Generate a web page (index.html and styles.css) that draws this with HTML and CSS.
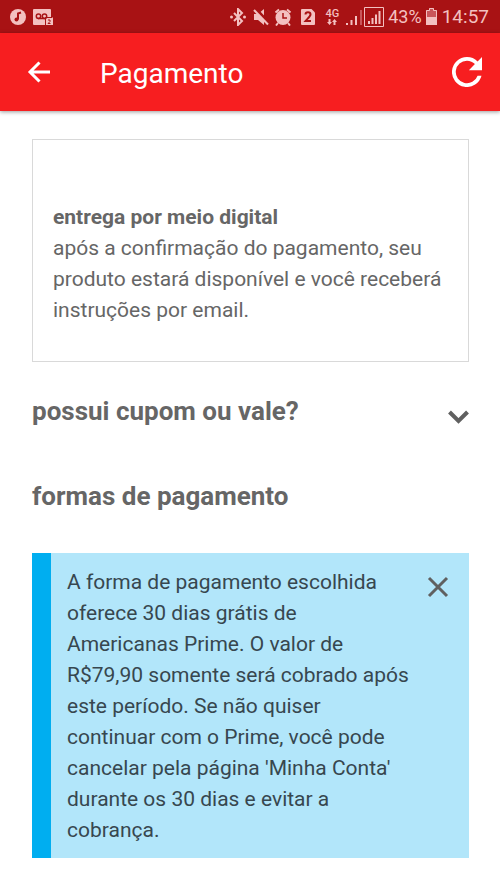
FILE: index.html
```html
<!DOCTYPE html>
<html lang="pt-BR">
<head>
<meta charset="utf-8">
<meta name="viewport" content="width=device-width, initial-scale=1">
<title>Pagamento</title>
<link rel="stylesheet" href="styles.css">
</head>
<body>
<div class="status">
  <div class="status-group status-left">
    <svg width="16" height="16" viewBox="0 0 16 16"><circle class="tint" cx="8" cy="8" r="8"/><circle class="hole" cx="6.500" cy="10.500" r="2"/><path class="cut" d="M8 10.500V4.500l3-1"/></svg>
    <svg width="20" height="16" viewBox="0 0 20 16"><path class="tint" d="M1 0h16a1 1 0 0 1 1 1v7h2v8H1a1 1 0 0 1-1-1V1a1 1 0 0 1 1-1z"/><path class="cut medium" d="M5 9.500h8"/><circle class="cut medium" cx="5.500" cy="7.200" r="2.200"/><circle class="cut medium" cx="11.500" cy="7.200" r="2.200"/><path class="cut thin" d="M12.500 16V8.500h7"/><path class="cut thin" d="M15 11h2v1.500L15 14.500h2.500"/></svg>
  </div>
  <div class="status-group status-right">
    <svg width="16" height="18" viewBox="0 0 16 18"><path class="line" d="M4 5l8 8-4 4V1l4 4-8 8"/><circle class="tint" cx="1.500" cy="9" r="1.500"/><circle class="tint" cx="14.500" cy="9" r="1.500"/></svg>
    <svg width="16" height="18" viewBox="0 0 16 18"><path class="tint" d="M1 6h4l6-5v16l-6-5H1z"/><path class="slash-gap" d="M2 0l14 15"/><path class="line" d="M1 2l14 14.500"/></svg>
    <svg class="alarm" width="18" height="18" viewBox="0 0 18 18"><circle class="tint" cx="9" cy="9.500" r="7.500"/><path class="line" d="M1.500 4.500l3.500-3M16.500 4.500l-3.500-3M4 15l-2 2.500M14 15l2 2.500"/><path class="cut medium" d="M9 5v5h4"/></svg>
    <svg class="sim" width="14" height="16" viewBox="0 0 14 16"><path class="tint" d="M1 0h9.500L14 3.500V15a1 1 0 0 1-1 1H1a1 1 0 0 1-1-1V1a1 1 0 0 1 1-1z"/><path class="cut" d="M4.500 5.500c0-3 5-3 5 0 0 2-3 4-5 6.500h5.500"/></svg>
    <span class="network">4G<svg width="10" height="7" viewBox="0 0 10 7"><path class="tint" d="M1.500 0h2v3H5L2.500 6 0 3h1.500zM6.500 6h2V3H10L7.500 0 5 3h1.500z"/></svg></span>
    <svg class="signal" width="17" height="18" viewBox="0 0 17 18"><path class="tint" d="M0 15h2v2H0zM4.500 12h2v5h-2zM9 8h2v9H9z"/><path class="faint" d="M14 2h2v15h-2z"/></svg>
    <svg class="signal-box" width="20" height="20" viewBox="0 0 20 20"><path class="line thin" d="M.5 .5h19v19H.5z"/><path class="tint" d="M4 14h2v3H4zM7.500 11h2v6h-2zM11 7.500h2V17h-2zM14.500 4h2v13h-2z"/></svg>
    <span class="percent">43%</span>
    <svg class="battery" width="11" height="17" viewBox="0 0 11 17"><path class="faint" d="M0 2h3V0h5v2h3v15H0z"/><path class="tint" d="M0 9h11v8H0z"/><path class="line thin" d="M.5 9V2.500h3v-2h4v2h3V9"/></svg>
    <span class="clock">14:57</span>
  </div>
</div>
<header class="bar">
  <button class="icon-button back" type="button" aria-label="Voltar">
    <svg width="24" height="24" viewBox="0 0 24 24"><path class="stroke" d="M23 12H3M12.500 2.500L3 12l9.500 9.500"/></svg>
  </button>
  <h1>Pagamento</h1>
  <button class="icon-button" type="button" aria-label="Atualizar">
    <svg width="30" height="30" viewBox="4 4 16 16"><path class="fill" d="M17.650 6.350A7.958 7.958 0 0 0 12 4a8 8 0 1 0 7.730 10h-2.080A6 6 0 1 1 12 6c1.660 0 3.140.69 4.220 1.780L13 11h7V4z"/></svg>
  </button>
</header>
<main>
  <section class="delivery">
    <strong>entrega por meio digital</strong>
    <p>após a confirmação do pagamento, seu produto estará disponível e você receberá instruções por email.</p>
  </section>
  <button class="coupon" type="button">
    <span>possui cupom ou vale?</span>
    <svg width="21" height="16" viewBox="0 0 21 16"><path class="mark" d="M1.500 3l9 9 9-9"/></svg>
  </button>
  <h2>formas de pagamento</h2>
  <section class="notice">
    <p>A forma de pagamento escolhida oferece 30 dias grátis de Americanas Prime. O valor de R$79,90 somente será cobrado após este período. Se não quiser continuar com o Prime, você pode cancelar pela página 'Minha Conta' durante os 30 dias e evitar a cobrança.</p>
    <button class="icon-button close" type="button" aria-label="Fechar">
      <svg width="22" height="22" viewBox="0 0 22 22"><path class="mark cross" d="M2 2l18 18M20 2L2 20"/></svg>
    </button>
  </section>
</main>
</body>
</html>
```
FILE: styles.css
```css
* { box-sizing: border-box; }
body {
  margin: 0;
  background: #fff;
  color: #666;
  font-family: Roboto, sans-serif;
  font-size: 21px;
  line-height: 31px;
}
h1, h2, p { margin: 0; }
svg { display: block; flex: none; fill: none; }
button {
  padding: 0;
  border: 0;
  background: none;
  color: inherit;
  font: inherit;
  cursor: pointer;
}

.status {
  display: flex;
  justify-content: space-between;
  align-items: center;
  height: 33px;
  padding: 0 11px 0 10px;
  background: #a81214;
  color: #f3c0c0;
}
.status-group { display: flex; align-items: center; gap: 7px; }
.tint { fill: #f3c0c0; }
.faint { fill: #c9565a; }
.hole { fill: #a81214; }
.line { stroke: #f3c0c0; stroke-width: 2; }
.cut { stroke: #a81214; stroke-width: 2; }
.slash-gap { stroke: #a81214; stroke-width: 3; }
.medium { stroke-width: 1.5; }
.thin { stroke-width: 1; }
.alarm { margin-left: -2px; }
.sim { margin: 0 4px 0 2px; }
.network {
  display: flex;
  flex-direction: column;
  align-items: center;
  font-size: 11px;
  font-weight: 500;
  line-height: 11px;
}
.signal { margin-right: -6px; }
.percent, .clock { font-size: 19px; line-height: 33px; }
.percent { margin: 0 -3px; font-size: 18px; }
.battery { margin-right: -2px; }

.bar {
  display: flex;
  align-items: center;
  height: 78px;
  padding: 0 18px 0 27px;
  background: #f71e20;
  color: #fff;
  box-shadow: 0 1px 4px rgba(0, 0, 0, 0.4);
}
.bar h1 {
  flex: 1;
  padding: 3px 0 0 49px;
  font-size: 28px;
  font-weight: 400;
  line-height: 36px;
}
.icon-button { display: flex; align-items: center; justify-content: center; }
.stroke { stroke: currentColor; stroke-width: 3; }
.fill { fill: currentColor; }

main { padding: 28px 31px 28px 32px; }
.delivery {
  padding: 62px 20px 35px;
  border: 1px solid #d9d9d9;
}
.delivery strong { display: block; }
.coupon {
  display: flex;
  align-items: center;
  justify-content: space-between;
  width: 100%;
  margin-top: 32px;
  text-align: left;
}
.coupon, h2 { font-size: 26px; font-weight: 700; line-height: 34px; }
.coupon svg { margin-top: 12px; }
.mark { stroke: #606060; stroke-width: 4; }
.cross { stroke-width: 3; }
h2 { margin-top: 51px; }
.notice {
  display: flex;
  align-items: flex-start;
  margin-top: 40px;
  padding: 14px 11px 12px 16px;
  border-left: 19px solid #00aef0;
  background: #b2e6fa;
  color: #37474f;
}
.notice p { flex: 1; padding-right: 7px; }
.close { width: 40px; padding-top: 9px; }
```
